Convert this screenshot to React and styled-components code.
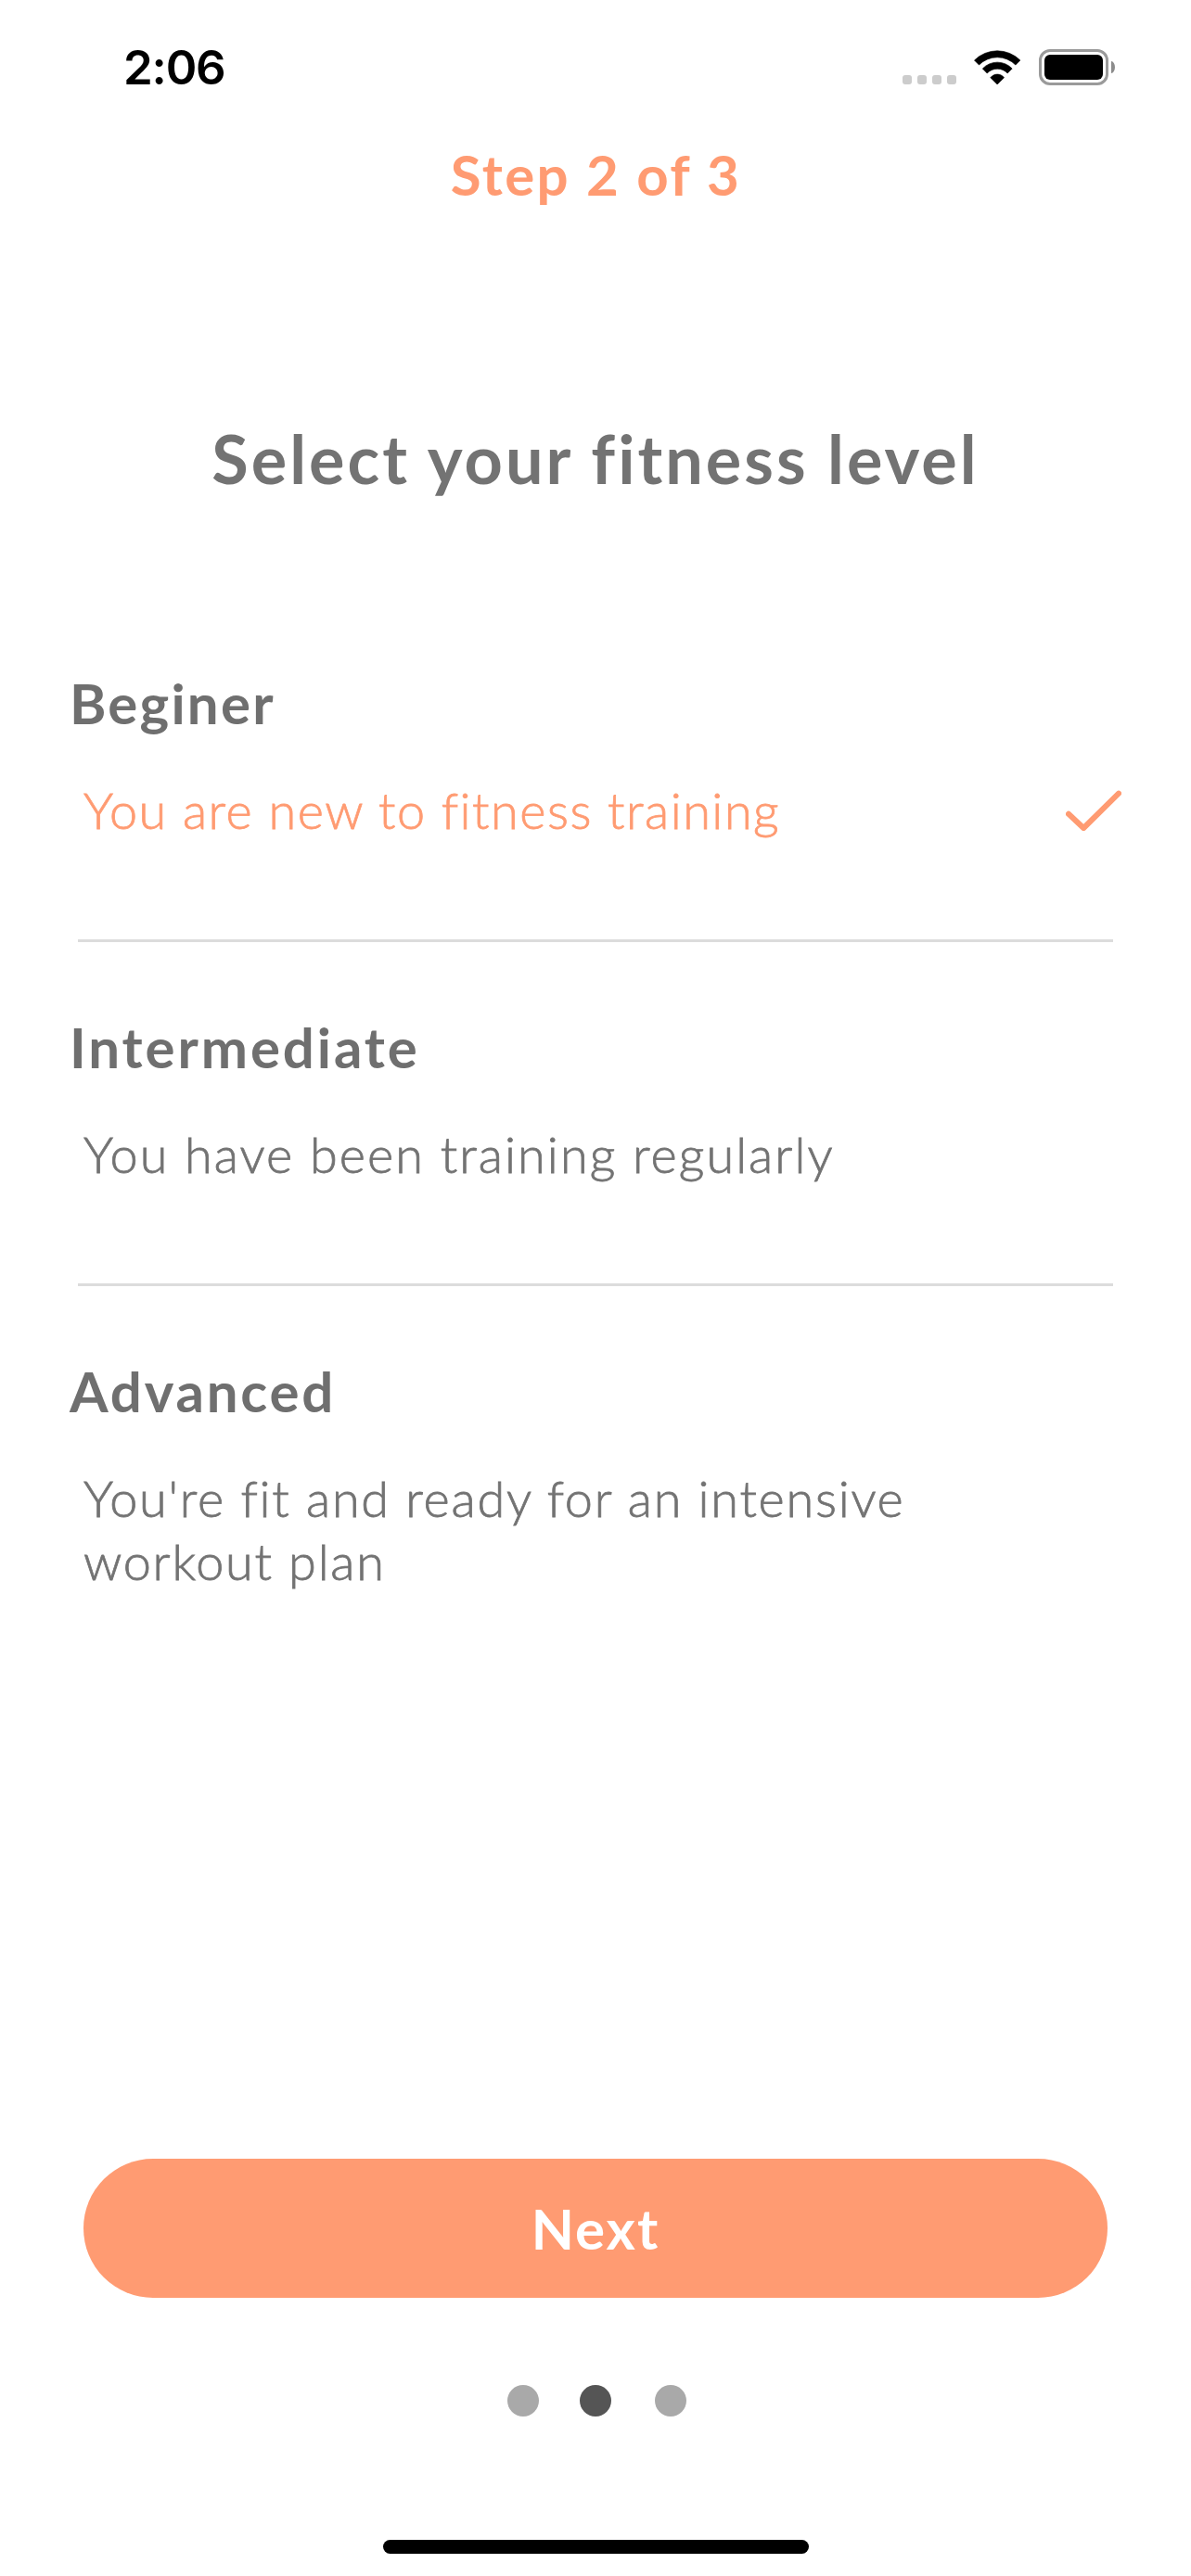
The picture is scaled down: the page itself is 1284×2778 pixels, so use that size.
import React, { useState } from "react";
import styled, { createGlobalStyle } from "styled-components";

const CORAL = "#ff9b72";
const GRAY = "#737373";

const GlobalStyle = createGlobalStyle`
  *, *::before, *::after { box-sizing: border-box; }
  body { margin: 0; background: #fff; }
`;

const Screen = styled.div`
  display: flex;
  flex-direction: column;
  width: 1284px;
  height: 2778px;
  overflow: hidden;
  background: #fff;
  color: ${GRAY};
  font-family: Lato, "Open Sans", sans-serif;
  font-variant-ligatures: none;
`;

const StatusBar = styled.header`
  display: flex;
  align-items: center;
  justify-content: space-between;
  height: 145px;
  padding: 0 82px 0 133px;
`;

const Time = styled.time`
  color: #000;
  font: 600 51px/60px Inter, sans-serif;
  letter-spacing: -1.2px;
`;

const StatusIcons = styled.div`
  display: flex;
  align-items: center;
  gap: 19px;
`;

const Cellular = styled.div`
  display: flex;
  gap: 6px;
  margin-top: 27px;
`;

const CellularDot = styled.span`
  width: 10px;
  height: 10px;
  border-radius: 3px;
  background: #ccc;
`;

const Battery = styled.div`
  display: flex;
  align-items: center;
  gap: 3px;
`;

const BatteryCase = styled.div`
  width: 75px;
  height: 39px;
  padding: 3px;
  border: 3px solid #9a9a9a;
  border-radius: 12px;
`;

const BatteryCharge = styled.div`
  height: 100%;
  border-radius: 6px;
  background: #000;
`;

const BatteryTip = styled.div`
  width: 4px;
  height: 13px;
  border-radius: 0 4px 4px 0 / 0 6.5px 6.5px 0;
  background: #8c8c8c;
`;

const StepLabel = styled.p`
  margin: 8px 0 0;
  padding-left: 1px;
  color: ${CORAL};
  font-size: 60px;
  font-weight: 700;
  line-height: 70px;
  letter-spacing: 2.4px;
  text-align: center;
`;

const Title = styled.h1`
  margin: 229px 0 0;
  font-size: 72px;
  font-weight: 700;
  line-height: 84px;
  letter-spacing: 3px;
  text-align: center;
`;

const Options = styled.div`
  display: flex;
  flex-direction: column;
  margin-top: 109px;
`;

const Option = styled.section`
  padding-top: 78px;
  cursor: pointer;
`;

const OptionName = styled.h2`
  margin: 0 0 47px;
  padding-left: 75px;
  color: #6f6f6f;
  font-size: 60px;
  font-weight: 700;
  line-height: 70px;
  letter-spacing: ${(p) => p.$tracking}px;
`;

const OptionRow = styled.div`
  display: flex;
  align-items: center;
  justify-content: space-between;
  padding: 0 75px 0 90px;
`;

const OptionText = styled.p`
  max-width: 920px;
  margin: 0;
  color: ${(p) => (p.$selected ? CORAL : GRAY)};
  font-size: 54px;
  font-weight: 300;
  line-height: 68px;
  letter-spacing: ${(p) => p.$tracking}px;
  -webkit-text-stroke: 0.8px currentColor;
`;

const Divider = styled.hr`
  height: 3px;
  margin: 105px 84px 0;
  border: 0;
  background: #dcdcdc;
`;

const Footer = styled.footer`
  display: flex;
  flex-direction: column;
  align-items: center;
  margin-top: auto;
  padding: 0 90px 24px;
`;

const NextButton = styled.button`
  width: 100%;
  height: 150px;
  padding: 0;
  border: 0;
  border-radius: 75px;
  background: ${CORAL};
  color: #fff;
  font: 700 60px/70px Lato, sans-serif;
  letter-spacing: 2px;
`;

const Pager = styled.nav`
  display: flex;
  gap: 44px;
  margin: 94px 0 133px 3px;
`;

const PagerDot = styled.span`
  width: 34px;
  height: 34px;
  border-radius: 50%;
  background: ${(p) => (p.$active ? "#555" : "#a9a9a9")};

  &:last-child { margin-left: 3px; }
`;

const HomeIndicator = styled.div`
  width: 459px;
  height: 15px;
  border-radius: 8px;
  background: #000;
`;

const WifiIcon = () => (
  <svg width="50.7" height="37.7" viewBox="301 71 152 113">
    <g stroke="#000" strokeWidth="2" strokeLinejoin="round">
      <path d="M302.500 104A105 105 0 0 1 450.500 104L435.500 119A83 83 0 0 0 317.500 119Z" />
      <path d="M329 131A65.600 65.600 0 0 1 424.500 131L409.500 146A45 45 0 0 0 343.500 146Z" />
      <path d="M354.500 160A28 28 0 0 1 398.500 160L376.500 182Z" />
    </g>
  </svg>
);

const CheckIcon = () => (
  <svg width="60" height="44" viewBox="0 0 60 44" fill="none">
    <path
      d="M3 25.800L19.200 41L57 3.700"
      stroke={CORAL}
      strokeWidth="6"
      strokeLinecap="round"
      strokeLinejoin="round"
    />
  </svg>
);

const levels = [
  {
    name: "Beginer",
    nameTracking: 2.2,
    text: "You are new to fitness training",
    textTracking: 1.5,
  },
  {
    name: "Intermediate",
    nameTracking: 2.9,
    text: "You have been training regularly",
    textTracking: 2.05,
  },
  {
    name: "Advanced",
    nameTracking: 2.8,
    text: "You're fit and ready for an intensive workout plan",
    textTracking: 1.75,
  },
];

export default function App() {
  const [selected, setSelected] = useState(0);
  return (
    <Screen>
      <GlobalStyle />
      <StatusBar>
        <Time>2:06</Time>
        <StatusIcons>
          <Cellular>
            {[0, 1, 2, 3].map((i) => (
              <CellularDot key={i} />
            ))}
          </Cellular>
          <WifiIcon />
          <Battery>
            <BatteryCase>
              <BatteryCharge />
            </BatteryCase>
            <BatteryTip />
          </Battery>
        </StatusIcons>
      </StatusBar>
      <StepLabel>Step 2 of 3</StepLabel>
      <Title>Select your fitness level</Title>
      <Options>
        {levels.map((level, i) => (
          <Option key={level.name} onClick={() => setSelected(i)}>
            <OptionName $tracking={level.nameTracking}>{level.name}</OptionName>
            <OptionRow>
              <OptionText $selected={i === selected} $tracking={level.textTracking}>
                {level.text}
              </OptionText>
              {i === selected && <CheckIcon />}
            </OptionRow>
            {i < levels.length - 1 && <Divider />}
          </Option>
        ))}
      </Options>
      <Footer>
        <NextButton>Next</NextButton>
        <Pager>
          {levels.map((level, i) => (
            <PagerDot key={level.name} $active={i === 1} />
          ))}
        </Pager>
        <HomeIndicator />
      </Footer>
    </Screen>
  );
}
